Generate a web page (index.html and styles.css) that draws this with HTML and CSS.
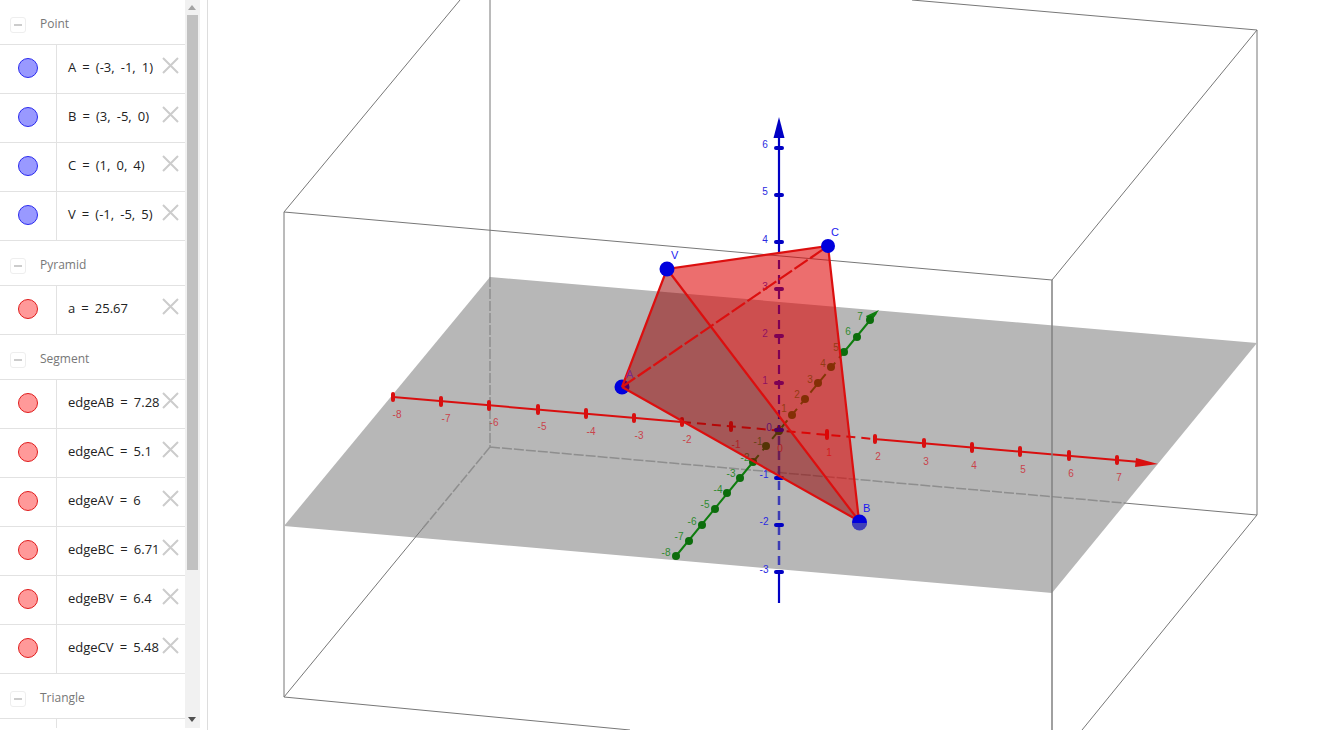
FILE: index.html
```html
<!DOCTYPE html>
<html lang="en">
<head>
    <meta charset="UTF-8">
    <title>Pyramid</title>
    <link rel="stylesheet" href="styles.css">
</head>
<body>
    <div class="app">
        <!-- algebra view -->
        <div class="algebra">
            <div class="group"><span class="toggle"></span><span class="group-name">Point</span></div>
            <div class="row">
                <div class="marble-cell"><span class="marble blue"></span></div>
                <div class="value">A = (-3, -1, 1)</div>
                <svg class="close" viewBox="0 0 17 17"><path d="M1 1L16 16M16 1L1 16"/></svg>
            </div>
            <div class="row">
                <div class="marble-cell"><span class="marble blue"></span></div>
                <div class="value">B = (3, -5, 0)</div>
                <svg class="close" viewBox="0 0 17 17"><path d="M1 1L16 16M16 1L1 16"/></svg>
            </div>
            <div class="row">
                <div class="marble-cell"><span class="marble blue"></span></div>
                <div class="value">C = (1, 0, 4)</div>
                <svg class="close" viewBox="0 0 17 17"><path d="M1 1L16 16M16 1L1 16"/></svg>
            </div>
            <div class="row">
                <div class="marble-cell"><span class="marble blue"></span></div>
                <div class="value">V = (-1, -5, 5)</div>
                <svg class="close" viewBox="0 0 17 17"><path d="M1 1L16 16M16 1L1 16"/></svg>
            </div>
            <div class="group"><span class="toggle"></span><span class="group-name">Pyramid</span></div>
            <div class="row">
                <div class="marble-cell"><span class="marble red"></span></div>
                <div class="value">a = 25.67</div>
                <svg class="close" viewBox="0 0 17 17"><path d="M1 1L16 16M16 1L1 16"/></svg>
            </div>
            <div class="group"><span class="toggle"></span><span class="group-name">Segment</span></div>
            <div class="row">
                <div class="marble-cell"><span class="marble red"></span></div>
                <div class="value">edgeAB = 7.28</div>
                <svg class="close" viewBox="0 0 17 17"><path d="M1 1L16 16M16 1L1 16"/></svg>
            </div>
            <div class="row">
                <div class="marble-cell"><span class="marble red"></span></div>
                <div class="value">edgeAC = 5.1</div>
                <svg class="close" viewBox="0 0 17 17"><path d="M1 1L16 16M16 1L1 16"/></svg>
            </div>
            <div class="row">
                <div class="marble-cell"><span class="marble red"></span></div>
                <div class="value">edgeAV = 6</div>
                <svg class="close" viewBox="0 0 17 17"><path d="M1 1L16 16M16 1L1 16"/></svg>
            </div>
            <div class="row">
                <div class="marble-cell"><span class="marble red"></span></div>
                <div class="value">edgeBC = 6.71</div>
                <svg class="close" viewBox="0 0 17 17"><path d="M1 1L16 16M16 1L1 16"/></svg>
            </div>
            <div class="row">
                <div class="marble-cell"><span class="marble red"></span></div>
                <div class="value">edgeBV = 6.4</div>
                <svg class="close" viewBox="0 0 17 17"><path d="M1 1L16 16M16 1L1 16"/></svg>
            </div>
            <div class="row">
                <div class="marble-cell"><span class="marble red"></span></div>
                <div class="value">edgeCV = 5.48</div>
                <svg class="close" viewBox="0 0 17 17"><path d="M1 1L16 16M16 1L1 16"/></svg>
            </div>
            <div class="group"><span class="toggle"></span><span class="group-name">Triangle</span></div>
            <div class="row">
                <div class="marble-cell"></div>
            </div>
        </div>

        <!-- scrollbar -->
        <div class="scrollbar">
            <div class="arrow-up"></div>
            <div class="thumb"></div>
            <div class="arrow-down"></div>
        </div>

        <!-- 3D view, drawn in page coordinates -->
        <svg class="graphics" viewBox="208 0 1128 730">
            <!-- box, back edges -->
            <path class="box" d="M490 0V277M284 212L460 0M912 0L1257 30V515M284 212V697L630 730M1257 515L1082 730"/>
            <polygon class="plane" points="490,277 1257,343 1052,593 284,526"/>
            <path class="box-hidden" d="M490 277V447M490 447L1124 503M490 447L423 528"/>
            <path class="box" d="M1124 503L1257 515M423 528L284 697"/>

            <!-- x axis -->
            <path class="axis-x" d="M393 397L682 422M880 439.5L1140 462"/>
            <path class="axis-x dash" d="M682 422L880 439.5"/>
            <polygon class="fill-x" points="1158,464 1136,458 1135,467"/>
            <path class="tick-x" d="M393 394V400M441 398V405M489 402V409M538 406V413M586 410V417M634 415V421M682 419V425M731 423V430M779 427V433M827 431V438M875 436V442M924 440V446M972 444V451M1020 448V455M1069 452V459M1117 457V463"/>
            <g class="label-x">
                <text x="397" y="418">-8</text><text x="446" y="422">-7</text><text x="494" y="426">-6</text>
                <text x="542" y="430">-5</text><text x="591" y="435">-4</text><text x="639" y="439">-3</text>
                <text x="687" y="443">-2</text><text x="736" y="448">-1</text><text x="780" y="452">0</text>
                <text x="829" y="456">1</text><text x="878" y="460">2</text><text x="926" y="465">3</text>
                <text x="974" y="469">4</text><text x="1023" y="473">5</text><text x="1071" y="477">6</text>
                <text x="1119" y="481">7</text>
            </g>

            <!-- y axis -->
            <path class="axis-y" d="M676 556L753 462M844 352L876 313"/>
            <path class="axis-y dash" d="M753 462L844 352"/>
            <polygon class="fill-y" points="879,310 866,316 870,323"/>
            <g class="dot-y">
                <circle cx="676" cy="556" r="4"/><circle cx="689" cy="541" r="4"/><circle cx="702" cy="525" r="4"/>
                <circle cx="715" cy="509" r="4"/><circle cx="727" cy="493" r="4"/><circle cx="740" cy="478" r="4"/>
                <circle cx="753" cy="462" r="4"/><circle cx="766" cy="446" r="4"/><circle cx="779" cy="431" r="4"/>
                <circle cx="792" cy="415" r="4"/><circle cx="805" cy="399" r="4"/><circle cx="818" cy="383" r="4"/>
                <circle cx="831" cy="367" r="4"/><circle cx="844" cy="352" r="4"/><circle cx="857" cy="337" r="4"/>
                <circle cx="870" cy="320" r="4"/>
            </g>
            <g class="label-y">
                <text x="666" y="556">-8</text><text x="679" y="540">-7</text><text x="692" y="525">-6</text>
                <text x="705" y="508">-5</text><text x="718" y="493">-4</text><text x="731" y="477">-3</text>
                <text x="745" y="461">-2</text><text x="758" y="445">-1</text>
                <text x="784" y="412">1</text><text x="797" y="398">2</text><text x="810" y="383">3</text>
                <text x="823" y="367">4</text><text x="836" y="351">5</text><text x="848" y="335">6</text>
                <text x="860" y="320">7</text>
            </g>

            <!-- z axis -->
            <path class="axis-z" d="M779 130V245M779 572V603"/>
            <path class="axis-z dash" d="M779 245V430"/>
            <path class="axis-z-under dash" d="M779 436V572"/>
            <polygon class="fill-z" points="779,117 773.500,138 784.500,138"/>
            <path class="tick-z" d="M776 148H782M776 195H782M776 242H782M776 289H782M776 336H782M776 383H782M776 430H782M776 478H782M776 525H782M776 572H782"/>
            <g class="label-z">
                <text x="765" y="148">6</text><text x="765" y="195">5</text><text x="765" y="243">4</text>
                <text x="765" y="290">3</text><text x="765" y="337">2</text><text x="765" y="384">1</text>
                <text x="769" y="431">0</text><text x="764" y="478">-1</text><text x="764" y="525">-2</text>
                <text x="764" y="573">-3</text>
            </g>

            <!-- front box edges -->
            <path class="box" d="M284 212L1052 280L1257 30"/>
            <path class="box-front" d="M1052 280V730"/>

            <!-- pyramid -->
            <circle class="point" cx="622" cy="387" r="7.500"/>
            <polygon class="face-front" points="667,269 828,246 859,521"/>
            <polygon class="face-side" points="622,387 667,269 859,521"/>
            <path class="edge dash-long" d="M622 387L828 246"/>
            <path class="edge" d="M622 387L667 269L828 246L859 521L622 387M667 269L859 521"/>
            <circle class="point" cx="667" cy="269" r="7.500"/>
            <circle class="point" cx="828" cy="246" r="7"/>
            <circle class="point" cx="859.500" cy="522" r="7.500"/>
            <path class="point-shade" d="M852 523A7.500 7.500 0 0 0 867 523Z"/>
            <text class="label-pt" x="626" y="378">A</text>
            <text class="label-pt blue-text" x="671" y="259">V</text>
            <text class="label-pt blue-text" x="831" y="236">C</text>
            <text class="label-pt blue-text" x="863" y="512">B</text>
        </svg>
    </div>
</body>
</html>
```

FILE: styles.css
```css
html, body {
    margin: 0;
    padding: 0;
    height: 100%;
    overflow: hidden;
    background-color: #fff;
}

.app {
    display: flex;
    height: 728px;
}

/* algebra view */
.algebra {
    width: 185px;
    height: 100%;
    overflow: hidden;
    flex-shrink: 0;
}

.group {
    display: flex;
    align-items: center;
    box-sizing: border-box;
    height: 45px;
    padding-left: 10px;
    border-bottom: 1px solid #e2e2e2;
}

.toggle {
    position: relative;
    box-sizing: border-box;
    width: 16px;
    height: 16px;
    border: 1px solid #eee;
    border-radius: 3px;
    margin: 6px 14px 0 0;
}

.toggle::after {
    content: "";
    position: absolute;
    left: 3px;
    top: 6px;
    width: 8px;
    height: 2px;
    background-color: #ccc;
}

.group-name {
    margin-top: 2px;
    font-family: "Open Sans", sans-serif;
    font-size: 12px;
    color: #777;
}

.row {
    display: flex;
    box-sizing: border-box;
    height: 49px;
    border-bottom: 1px solid #e2e2e2;
}

.marble-cell {
    display: flex;
    justify-content: center;
    align-items: center;
    box-sizing: border-box;
    width: 57px;
    padding-bottom: 2px;
    flex-shrink: 0;
    border-right: 1px solid #e2e2e2;
}

.marble {
    box-sizing: border-box;
    width: 20px;
    height: 20px;
    border-radius: 50%;
    border: 1px solid;
}

.marble.blue {
    background-color: #9999ff;
    border-color: #2a2aee;
}

.marble.red {
    background-color: #ff9999;
    border-color: #e01c1c;
}

.value {
    flex: 1;
    padding-left: 11px;
    line-height: 44px;
    font-family: "Open Sans", sans-serif;
    font-size: 13px;
    word-spacing: 2.7px;
    color: #222;
    white-space: nowrap;
}

.close {
    width: 17px;
    height: 17px;
    margin: 12px 6px 0 0;
    flex-shrink: 0;
    fill: none;
    stroke: #ccc;
    stroke-width: 2;
}

/* scrollbar */
.scrollbar {
    position: relative;
    width: 15px;
    height: 100%;
    flex-shrink: 0;
    background-color: #f1f1f1;
}

.thumb {
    position: absolute;
    left: 2px;
    top: 15px;
    width: 11px;
    height: 555px;
    background-color: #c1c1c1;
}

.arrow-up, .arrow-down {
    position: absolute;
    left: 3px;
    width: 0;
    height: 0;
    border-left: 4px solid transparent;
    border-right: 4px solid transparent;
}

.arrow-up {
    top: 5px;
    border-bottom: 5px solid #a3a3a3;
}

.arrow-down {
    bottom: 6px;
    border-top: 5px solid #505050;
}

/* 3D view */
.graphics {
    width: 1128px;
    height: 730px;
    margin-left: 7px;
    flex-shrink: 0;
    border-left: 1px solid #ddd;
    box-sizing: content-box;
    font-family: "Liberation Sans", Arial, sans-serif;
    font-size: 10px;
}

.plane {
    fill: #b7b7b7;
}

.box {
    fill: none;
    stroke: #777;
    stroke-width: 1;
}

.box-hidden {
    fill: none;
    stroke: #8e8e8e;
    stroke-width: 1.500;
    stroke-dasharray: 10 2;
}

.box-front {
    fill: none;
    stroke: #808080;
    stroke-width: 1.500;
}

.axis-x {
    fill: none;
    stroke: #d90f0f;
    stroke-width: 2;
}

.axis-y {
    fill: none;
    stroke: #0f7d0f;
    stroke-width: 2;
}

.axis-z {
    fill: none;
    stroke: #0000c4;
    stroke-width: 2.200;
}

.axis-z-under {
    fill: none;
    stroke: #3c3cb4;
    stroke-width: 2.500;
}

.dash {
    stroke-dasharray: 9 6;
}

.fill-x {
    fill: #d90f0f;
}

.fill-y {
    fill: #0f7d0f;
}

.fill-z {
    fill: #0000c4;
}

.tick-x {
    fill: none;
    stroke: #d90f0f;
    stroke-width: 4;
    stroke-linecap: round;
}

.tick-z {
    fill: none;
    stroke: #0000c4;
    stroke-width: 4;
    stroke-linecap: round;
}

.dot-y {
    fill: #0c6d0c;
}

.label-x {
    fill: #c9434b;
    text-anchor: middle;
}

.label-y {
    fill: #2f8a2f;
    text-anchor: middle;
}

.label-z {
    fill: #2a2ae0;
    text-anchor: middle;
}

.face-front {
    fill: rgba(222, 0, 0, 0.57);
}

.face-side {
    fill: rgba(150, 0, 0, 0.52);
}

.edge {
    fill: none;
    stroke: #dc0f0f;
    stroke-width: 2.200;
}

.dash-long {
    stroke-dasharray: 16 3;
}

.point {
    fill: #0000dd;
}

.point-shade {
    fill: #4040b8;
}

.label-pt {
    font-size: 11px;
    fill: #7a2a8c;
}

.blue-text {
    fill: #1a1af0;
}
```
